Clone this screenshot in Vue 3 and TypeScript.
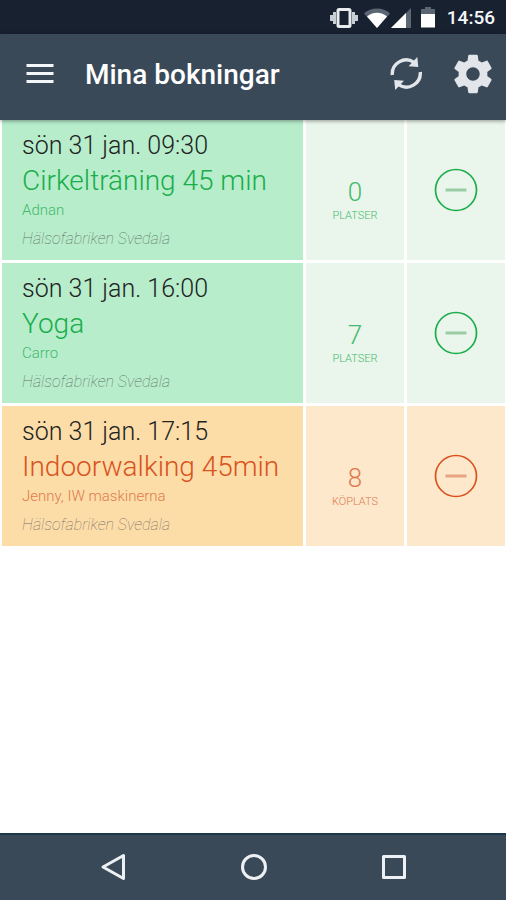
<script setup lang="ts">
interface Booking {
  id: number
  when: string
  title: string
  instructor: string
  place: string
  count: number
  label: string
  tone: 'green' | 'orange'
}

const bookings: Booking[] = [
  { id: 1, when: 'sön 31 jan. 09:30', title: 'Cirkelträning 45 min', instructor: 'Adnan', place: 'Hälsofabriken Svedala', count: 0, label: 'PLATSER', tone: 'green' },
  { id: 2, when: 'sön 31 jan. 16:00', title: 'Yoga', instructor: 'Carro', place: 'Hälsofabriken Svedala', count: 7, label: 'PLATSER', tone: 'green' },
  { id: 3, when: 'sön 31 jan. 17:15', title: 'Indoorwalking 45min', instructor: 'Jenny, IW maskinerna', place: 'Hälsofabriken Svedala', count: 8, label: 'KÖPLATS', tone: 'orange' },
]
</script>

<template>
  <div class="screen">
    <div class="status">
      <svg class="vibrate" width="28" height="22" viewBox="0 0 28 22" aria-hidden="true">
        <path d="M1.500 8v6M4.500 5v12M23.500 5v12M26.500 8v6" stroke="#c9ced4" stroke-width="3" />
        <rect x="8" y="2.500" width="12" height="17" rx="1" fill="none" stroke="#e9ecef" stroke-width="3" />
      </svg>
      <svg class="wifi" width="26" height="20" viewBox="0 0 26 20" aria-hidden="true">
        <path d="M0 5.500C7-1.200 19-1.200 26 5.500L13 20z" fill="#5c6672" />
        <path d="M3 8.600C8 3.500 18 3.500 23 8.600L13 20z" fill="#fff" />
      </svg>
      <svg class="signal" width="20" height="20" viewBox="0 0 20 20" aria-hidden="true">
        <path d="M20 0v20H0z" fill="#5c6672" />
        <path d="M15 5v15H0z" fill="#fff" />
      </svg>
      <svg class="battery" width="16" height="21" viewBox="0 0 16 21" aria-hidden="true">
        <path d="M1 2h4V0h6v2h4v5H1z" fill="#5c6672" />
        <path d="M1 7h14v13.500H1z" fill="#fff" />
      </svg>
      <time class="clock">14:56</time>
    </div>

    <header class="bar">
      <button class="icon-button" type="button" aria-label="Meny">
        <svg width="28" height="20" viewBox="0 0 28 20" aria-hidden="true">
          <path d="M0.500 1.500h27M0.500 9.500h27M0.500 17.500h27" stroke="#f4f6f8" stroke-width="3" />
        </svg>
      </button>
      <h1 class="heading">Mina bokningar</h1>
      <button class="icon-button" type="button" aria-label="Uppdatera">
        <svg width="34" height="36" viewBox="0 0 34 36" fill="none" aria-hidden="true">
          <path d="M3.300 19A14 14 0 0 1 25 6.300M31.300 16A14 14 0 0 1 9.600 28.700" stroke="#e2e6ea" stroke-width="3.400" />
          <path d="M28.300 1L29.300 10.900L19.600 10.200zM6.200 34L5.200 24.100L15 24.800z" fill="#e2e6ea" />
        </svg>
      </button>
      <button class="icon-button gear" type="button" aria-label="Inställningar">
        <svg width="46" height="46" viewBox="0 0 24 24" aria-hidden="true">
          <path fill="#e2e6ea" d="M19.430 12.980c.04-.32.07-.64.07-.98s-.03-.66-.07-.98l2.110-1.650c.19-.15.24-.42.12-.64l-2-3.460c-.12-.22-.39-.3-.61-.22l-2.490 1c-.52-.4-1.080-.73-1.690-.98l-.38-2.650C14.460 2.180 14.250 2 14 2h-4c-.25 0-.46.18-.49.42l-.38 2.650c-.61.25-1.170.59-1.690.98l-2.490-1c-.23-.09-.49 0-.61.22l-2 3.460c-.13.22-.07.49.12.64l2.110 1.650c-.04.32-.07.65-.07.98s.03.66.07.98l-2.110 1.650c-.19.15-.24.42-.12.64l2 3.460c.12.22.39.3.61.22l2.490-1c.52.4 1.080.73 1.690.98l.38 2.650c.03.24.24.42.49.42h4c.25 0 .46-.18.49-.42l.38-2.650c.61-.25 1.170-.59 1.690-.98l2.490 1c.23.09.49 0 .61-.22l2-3.460c.12-.22.07-.49-.12-.64l-2.110-1.650zM12 15.500c-1.930 0-3.500-1.570-3.500-3.500s1.570-3.500 3.500-3.500 3.500 1.570 3.500 3.500-1.570 3.500-3.500 3.500z" />
        </svg>
      </button>
    </header>

    <main class="list">
      <article v-for="b in bookings" :key="b.id" class="booking" :class="b.tone">
        <div class="details">
          <time class="when">{{ b.when }}</time>
          <h2 class="title">{{ b.title }}</h2>
          <p class="instructor">{{ b.instructor }}</p>
          <p class="place">{{ b.place }}</p>
        </div>
        <div class="places">
          <span class="count">{{ b.count }}</span>
          <span class="label">{{ b.label }}</span>
        </div>
        <button class="cancel" type="button" :aria-label="'Avboka ' + b.title">
          <svg width="44" height="44" viewBox="0 0 44 44" fill="none" stroke="currentColor" aria-hidden="true">
            <circle cx="22" cy="22" r="20.500" stroke-width="1.700" />
            <path class="minus" d="M11.500 22h21" stroke-width="3" />
          </svg>
        </button>
      </article>
    </main>

    <nav class="system">
      <button class="icon-button" type="button" aria-label="Tillbaka">
        <svg width="28" height="30" viewBox="0 0 28 30" fill="none" stroke="#eef1f4" stroke-width="3" stroke-linejoin="round" aria-hidden="true">
          <path d="M24.500 3.500v23L4 15z" />
        </svg>
      </button>
      <button class="icon-button" type="button" aria-label="Hem">
        <svg width="28" height="30" viewBox="0 0 28 30" fill="none" stroke="#eef1f4" stroke-width="3" aria-hidden="true">
          <circle cx="14" cy="15" r="11.500" />
        </svg>
      </button>
      <button class="icon-button" type="button" aria-label="Översikt">
        <svg width="28" height="30" viewBox="0 0 28 30" fill="none" stroke="#eef1f4" stroke-width="3" stroke-linejoin="round" aria-hidden="true">
          <path d="M3.500 4.500h21v21h-21z" />
        </svg>
      </button>
    </nav>
  </div>
</template>

<style>
body {
  margin: 0;
  background: #fff;
}
</style>

<style scoped>
.screen {
  display: flex;
  flex-direction: column;
  min-height: 100vh;
  font-family: Roboto, "Liberation Sans", sans-serif;
}

svg {
  display: block;
}

.status {
  display: flex;
  align-items: center;
  justify-content: flex-end;
  box-sizing: border-box;
  height: 34px;
  padding: 1px 11px 0 0;
  background: #172130;
}

.wifi {
  margin-left: 6px;
}

.signal {
  margin-left: 1px;
}

.battery {
  margin-left: 9px;
}

.clock {
  margin-left: 11px;
  color: #f4f6f8;
  font-size: 19px;
  font-weight: 500;
}

.bar {
  position: relative;
  display: flex;
  align-items: center;
  box-sizing: border-box;
  height: 86px;
  padding: 0 10px 6px 26px;
  background: #394958;
  box-shadow: 0 1px 4px rgba(0, 0, 0, 0.4);
}

.icon-button {
  padding: 0;
  border: 0;
  background: none;
  cursor: pointer;
}

.heading {
  flex: 1;
  margin: 0 0 0 31px;
  padding-top: 2px;
  color: #fff;
  font-size: 28px;
  font-weight: 500;
  line-height: 34px;
}

.gear {
  margin-left: 27px;
}

.list {
  display: flex;
  flex: 1;
  flex-direction: column;
  gap: 3px;
  padding: 0 1px 0 2px;
}

.booking {
  display: grid;
  grid-template-columns: 301fr 98fr 98fr;
  gap: 3px;
}

.green {
  --strong: #b7edcb;
  --soft: #eaf5eb;
  --ink: #1aae4b;
  --ink-soft: #43ba6c;
  --muted: #5f7066;
  --minus: #9bcca6;
}

.orange {
  --strong: #fcdda8;
  --soft: #fde8cc;
  --ink: #d9531e;
  --ink-soft: #e07a4c;
  --muted: #7d706a;
  --minus: #e6a483;
}

.details {
  padding: 10px 4px 11px 20px;
  background: var(--strong);
}

.when {
  display: block;
  color: #222;
  font-size: 25px;
  font-weight: 300;
  line-height: 32px;
}

.title {
  margin: 0;
  color: var(--ink);
  font-size: 28px;
  font-weight: 300;
  line-height: 38px;
}

.instructor {
  margin: 0;
  color: var(--ink-soft);
  font-size: 15px;
  font-weight: 300;
  line-height: 20px;
}

.place {
  margin: 9px 0 0;
  color: var(--muted);
  font-size: 16px;
  font-style: italic;
  font-weight: 100;
  line-height: 20px;
}

.places {
  display: flex;
  flex-direction: column;
  align-items: center;
  justify-content: center;
  padding-top: 20px;
  background: var(--soft);
  color: var(--ink-soft);
  font-weight: 300;
}

.count {
  font-size: 26px;
  line-height: 32px;
}

.label {
  font-size: 11px;
  line-height: 16px;
}

.cancel {
  display: grid;
  place-items: center;
  padding: 0;
  border: 0;
  background: var(--soft);
  color: var(--ink);
  cursor: pointer;
}

.minus {
  stroke: var(--minus);
}

.system {
  display: flex;
  align-items: center;
  justify-content: space-between;
  box-sizing: border-box;
  height: 67px;
  padding: 0 98px 2px 99px;
  border-top: 2px solid #1c364b;
  background: #394958;
}
</style>
